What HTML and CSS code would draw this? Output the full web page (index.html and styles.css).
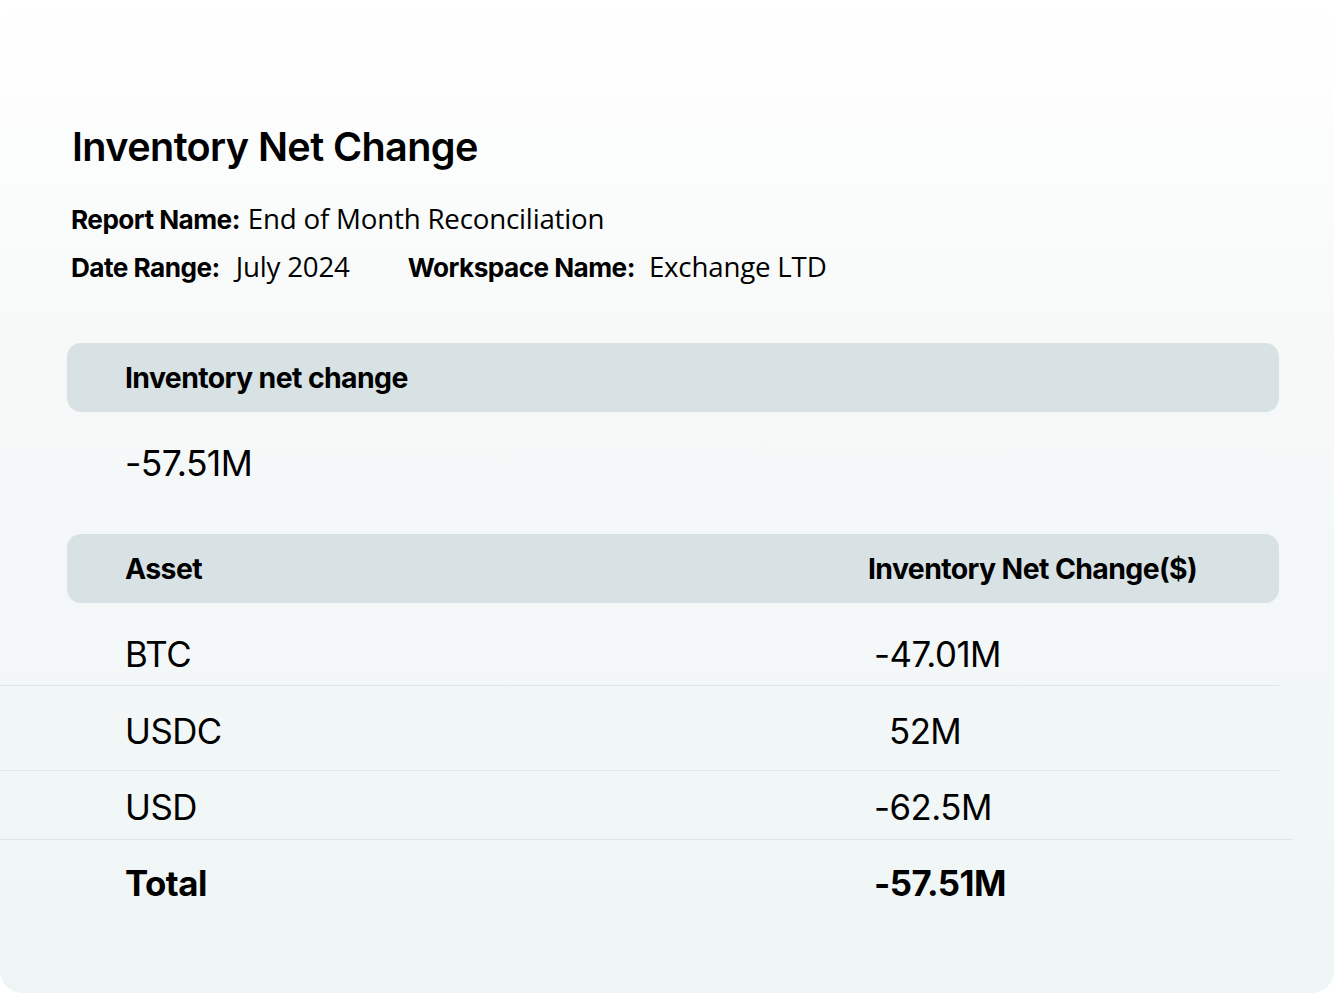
FILE: index.html
```html
<!DOCTYPE html>
<html lang="en">
<head>
<meta charset="utf-8">
<title>Inventory Net Change</title>
<link rel="stylesheet" href="styles.css">
</head>
<body>
<main class="card">
  <h1 class="title">Inventory Net Change</h1>
  <div class="meta">
    <div class="meta-line">
      <span class="label">Report Name:</span>
      <span class="value">End of Month Reconciliation</span>
    </div>
    <div class="meta-line">
      <span class="label">Date Range:</span>
      <span class="value value-gap">July 2024</span>
      <span class="label label-ws">Workspace Name:</span>
      <span class="value value-gap2">Exchange LTD</span>
    </div>
  </div>

  <div class="bar">
    <span class="bar-cell">Inventory net change</span>
  </div>
  <div class="summary">-57.51M</div>

  <div class="bar bar-table">
    <span class="bar-cell col-asset">Asset</span>
    <span class="bar-cell col-head-val">Inventory Net Change($)</span>
  </div>
  <div class="rows">
    <div class="row row-1">
      <span class="col-asset">BTC</span>
      <span class="col-val">-47.01M</span>
    </div>
    <div class="row row-2">
      <span class="col-asset">USDC</span>
      <span class="col-val col-pos">52M</span>
    </div>
    <div class="row row-3 row-wide">
      <span class="col-asset">USD</span>
      <span class="col-val">-62.5M</span>
    </div>
    <div class="row row-total">
      <span class="col-asset">Total</span>
      <span class="col-val">-57.51M</span>
    </div>
  </div>
</main>
</body>
</html>
```

FILE: styles.css
```css
html, body {
  margin: 0;
  padding: 0;
  background: #ffffff;
}

body {
  font-family: "Inter", "Liberation Sans", sans-serif;
  color: #000000;
}

.card {
  box-sizing: border-box;
  width: 1334px;
  height: 993px;
  border-radius: 22px;
  background: linear-gradient(180deg, #ffffff 0%, #f7f9f9 35%, #f3f7f7 65%, #eff5f5 100%);
  padding: 124px 55px 0 67px;
  overflow: hidden;
}

.title {
  margin: 0 0 0 5px;
  font-size: 39.6px;
  line-height: 46px;
  font-weight: 600;
  letter-spacing: -0.6px;
}

.meta {
  margin: 24px 0 0 4px;
}

.meta-line {
  display: flex;
  align-items: baseline;
  height: 48px;
  line-height: 48px;
}

.label {
  font-family: "Inter", "Liberation Sans", sans-serif;
  font-weight: 700;
  font-size: 26.2px;
  letter-spacing: -0.55px;
}

.value {
  font-family: "Open Sans", "Noto Sans", sans-serif;
  font-weight: 400;
  font-size: 27.7px;
  margin-left: 8px;
  letter-spacing: -0.2px;
}

.value-gap {
  margin-left: 16px;
}

.value-gap2 {
  margin-left: 14px;
}

.label-ws {
  margin-left: 58px;
}

.bar {
  display: flex;
  align-items: center;
  height: 69px;
  margin-top: 53px;
  background: #d8e2e4;
  border-radius: 14px;
  padding-left: 58px;
  font-weight: 700;
  font-size: 28.4px;
  letter-spacing: -0.6px;
}

.summary {
  height: 122px;
  padding-left: 58px;
  padding-top: 32px;
  box-sizing: border-box;
  font-size: 35.5px;
  letter-spacing: -0.6px;
  line-height: 40px;
}

.bar-table {
  margin-top: 0;
}

.bar-table .col-asset {
  width: 743px;
}

.rows {
  margin-left: -67px;
}

.row {
  display: flex;
  align-items: flex-end;
  box-sizing: border-box;
  width: 1279px;
  padding-left: 125px;
  border-bottom: 1.5px solid #dde7e8;
  font-size: 34.8px;
  letter-spacing: -0.5px;
  line-height: 40px;
}

.row .col-asset {
  width: 749px;
}

.row-1 {
  height: 83px;
  padding-bottom: 11px;
}

.row-2 {
  height: 85px;
  padding-bottom: 19px;
}

.row-3 {
  height: 69px;
  padding-bottom: 12px;
}

.row-wide {
  width: 1293px;
}

.row-total {
  border-bottom: none;
  height: 63px;
  font-weight: 700;
  padding-bottom: 0;
}

.col-pos {
  padding-left: 15px;
}
```
